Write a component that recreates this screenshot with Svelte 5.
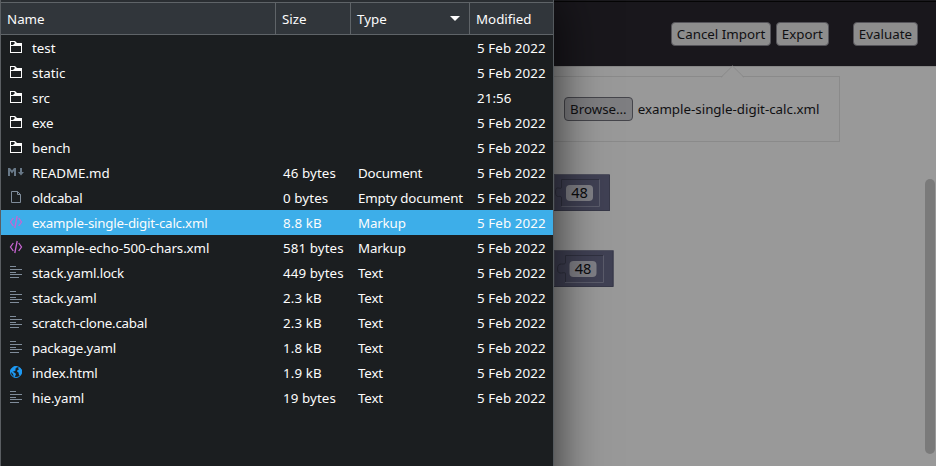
<script>
  const files = [
    ['folder', 'test', '', '', '5 Feb 2022', 0],
    ['folder', 'static', '', '', '5 Feb 2022', 0],
    ['folder', 'src', '', '', '21:56', 0],
    ['folder', 'exe', '', '', '5 Feb 2022', 0],
    ['folder', 'bench', '', '', '5 Feb 2022', 0],
    ['md', 'README.md', '46 bytes', 'Document', '5 Feb 2022', 0],
    ['file', 'oldcabal', '0 bytes', 'Empty document', '5 Feb 2022', -0.3],
    ['xml', 'example-single-digit-calc.xml', '8.8 kB', 'Markup', '5 Feb 2022', -0.22],
    ['xml', 'example-echo-500-chars.xml', '581 bytes', 'Markup', '5 Feb 2022', -0.1],
    ['text', 'stack.yaml.lock', '449 bytes', 'Text', '5 Feb 2022', -0.17],
    ['text', 'stack.yaml', '2.3 kB', 'Text', '5 Feb 2022', -0.15],
    ['text', 'scratch-clone.cabal', '2.3 kB', 'Text', '5 Feb 2022', -0.22],
    ['text', 'package.yaml', '1.8 kB', 'Text', '5 Feb 2022', -0.17],
    ['web', 'index.html', '1.9 kB', 'Text', '5 Feb 2022', -0.1],
    ['text', 'hie.yaml', '19 bytes', 'Text', '5 Feb 2022', -0.1],
  ];
  const selected = 'example-single-digit-calc.xml';
</script>

<div class="screen">
  <div class="page">
    <header>
      <button class="import">Cancel Import</button>
      <button class="export">Export</button>
      <button>Evaluate</button>
    </header>
    <div class="content">
      <div class="popup">
        <button class="browse">Browse…</button>
        <span>example-single-digit-calc.xml</span>
        <svg class="arrow" width="26" height="13" viewBox="0 0 26 13">
          <path d="M1 13 L12.5 1 L24 13Z" fill="#999" />
          <path d="M1 12.3 L12.5 1 L24 12.3" fill="none" stroke="#8a8a8a" />
        </svg>
      </div>
      <svg class="workspace" width="80" height="125" viewBox="0 0 80 125">
        <g>
          <path d="M0 .5H56V37H0Z" fill="#404154" />
          <path d="M0 .5H55.5M.5 1V36" fill="none" stroke="#50515f" />
          <path d="M0 36.500H55.500V1" fill="none" stroke="#373848" />
          <path d="M45.500 5.500H7.500V13C7.500 17 1.500 10 1.500 18C1.500 26 7.500 20 7.500 24V32" fill="none" stroke="#303140" />
          <path d="M7.500 32.500H45.500V5.500" fill="none" stroke="#5b5c6b" />
          <rect x="12" y="11" width="27" height="16" rx="4" fill="#808087" />
        </g>
        <g>
          <path d="M0 76.500H59.500V113H0Z" fill="#404154" />
          <path d="M0 76.500H59.500M.5 77V112" fill="none" stroke="#50515f" />
          <path d="M0 112.500H59V77" fill="none" stroke="#373848" />
          <path d="M49 81.500H11.500V88C11.500 93 3.500 86 3.500 95C3.500 103 11.500 96 11.500 100V108" fill="none" stroke="#303140" />
          <path d="M11 108.500H49.500V81.500" fill="none" stroke="#5b5c6b" />
          <rect x="15.500" y="87" width="27" height="16" rx="4" fill="#808087" />
        </g>
        <text x="25.500" y="24">48</text>
        <text x="29" y="100">48</text>
      </svg>
      <div class="scrollbar"></div>
    </div>
  </div>

  <section class="dialog">
    <div class="head row">
      <span>Name</span>
      <span>Size</span>
      <span>Type
        <svg width="10" height="5" viewBox="0 0 10 5"><path d="M0 0H10L5 5Z" fill="#fcfcfc" /></svg>
      </span>
      <span>Modified</span>
    </div>
    {#each files as [kind, name, size, type, modified, tracking]}
      <div class="row" class:selected={name === selected}>
        <span class="name" style:letter-spacing="{tracking}px">
          <svg width="16" height="16" viewBox="0 0 16 16">
            {#if kind === 'folder'}
              <path d="M2 2H7L9 4H14V14H2ZM3 7V13H13V7ZM3 3V6H5L7 4L6 3Z" fill="#fcfcfc" fill-rule="evenodd" />
            {:else if kind === 'md'}
              <path d="M0 12V4H2L4 6.500L6 4H8V12H6V7L4 9.500L2 7V12ZM12 4H14V8H16L13 11.500L10 8H12Z" fill="#687887" />
            {:else if kind === 'file'}
              <path d="M3.500 2.500H9.500L12.500 5.500V13.500H3.500ZM9.500 2.500V5.500H12.500" fill="none" stroke="#7f8c9a" />
            {:else if kind === 'xml'}
              <path d="M5.300 4L2.500 8L5.300 12M10.700 4L13.500 8L10.700 12M9.200 2L6.800 14" fill="none" stroke="#c865d2" stroke-width="1.300" />
            {:else if kind === 'web'}
              <circle cx="8" cy="8" r="5.500" fill="none" stroke="#1d99f3" />
              <path d="M3 5L6 2.500L9 2L8.500 4L7 5L8 6L6 7.500H4.500L7 9L8 10L7 12.500L6 13.500L5 10L2 7ZM10 4L12 3.500L14 6V9L12.500 11.500L11 11L10.500 8.500L9 7.500L9.500 6L11 5.500Z" fill="#1d99f3" />
            {:else}
              <path d="M2 2.500H8M2 5.500H14M2 8.500H8M2 10.500H14M2 13.500H11" stroke="#7f8c9a" />
            {/if}
          </svg>
          {name}
        </span>
        <span class="size">{size}</span>
        <span class="type">{type}</span>
        <span class="date">{modified}</span>
      </div>
    {/each}
  </section>
</div>

<style>
  :global(body) { overflow: hidden; }
  .screen {
    position: relative;
    height: 466px;
    overflow: hidden;
    background: #999;
    font-family: "Noto Sans", sans-serif;
    font-size: 13.333px;
    color: #101012;
  }
  header {
    box-sizing: border-box;
    height: 67px;
    padding: 1px 18px 0 0;
    display: flex;
    align-items: center;
    justify-content: flex-end;
    gap: 5px;
    background: linear-gradient(#1b1a1e 0 1px, #050505 1px 2px, #19171c 2px 66px, #888 66px);
  }
  button {
    box-sizing: border-box;
    height: 24px;
    padding: 0 5px;
    border: 1px solid #55545a;
    border-radius: 4px;
    background: #8d8d8d;
    color: #101012;
    font: inherit;
    line-height: 20px;
    white-space: nowrap;
  }
  .import { width: 100px; }
  .export { margin-right: 19px; }
  .content {
    height: 399px;
    display: grid;
    grid-template-columns: 554px 286px 85px 11px;
    grid-template-rows: 75px 1fr;
    padding-top: 9px;
    box-sizing: border-box;
  }
  .popup {
    grid-column: 2;
    position: relative;
    box-sizing: border-box;
    height: 66px;
    padding-left: 10px;
    display: flex;
    align-items: center;
    gap: 5px;
    border: 1px solid #8a8a8a;
    border-left: 0;
    white-space: nowrap;
  }
  .browse {
    border-color: #45454b;
    background: #7e7e81;
  }
  .arrow { position: absolute; left: 166px; top: -12px; }
  .workspace {
    grid-column: 2;
    grid-row: 2;
    margin-top: 23px;
    font-size: 14.600px;
  }
  .workspace text { fill: #0c0c0e; text-anchor: middle; }
  .scrollbar {
    grid-column: 4;
    grid-row: 1 / 3;
    width: 10px;
    height: 275px;
    margin-top: 103.400px;
    border-radius: 5px;
    background: #7a7a7a;
  }
  .dialog {
    position: absolute;
    inset: 0 auto -60px 0;
    box-sizing: border-box;
    width: 554px;
    border-left: 1px solid #5a5e62;
    border-right: 1px solid #54595d;
    background: #1b1e20;
    color: #fcfcfc;
    box-shadow: 0 0 48px 0 rgba(0, 0, 0, .75);
  }
  .row {
    height: 25px;
    display: grid;
    grid-template-columns: 275px 75px 119px 83px;
    align-items: center;
    white-space: nowrap;
  }
  .row > span { padding-left: 7px; }
  .row .name { display: flex; align-items: center; gap: 8px; }
  .name svg { flex: none; margin-top: -1px; }
  .size { letter-spacing: .1px; }
  .type { letter-spacing: -.15px; }
  .date { letter-spacing: .1px; }
  .selected { background: #3daee9; }
  .head {
    box-sizing: border-box;
    height: 35px;
    padding-top: 2px;
    border-bottom: 1px solid #5f6468;
    background: linear-gradient(#2a2e32 0 2px, #5f6468 2px 3px, #31363b 3px);
  }
  .row.head > span {
    box-sizing: border-box;
    height: 32px;
    padding: 2px 9px 0 6px;
    display: flex;
    align-items: center;
    justify-content: space-between;
    border-right: 1px solid #5f6468;
  }
  .row.head > span:last-child { border-right: 0; }
  .head svg { margin-top: -1px; }
</style>
